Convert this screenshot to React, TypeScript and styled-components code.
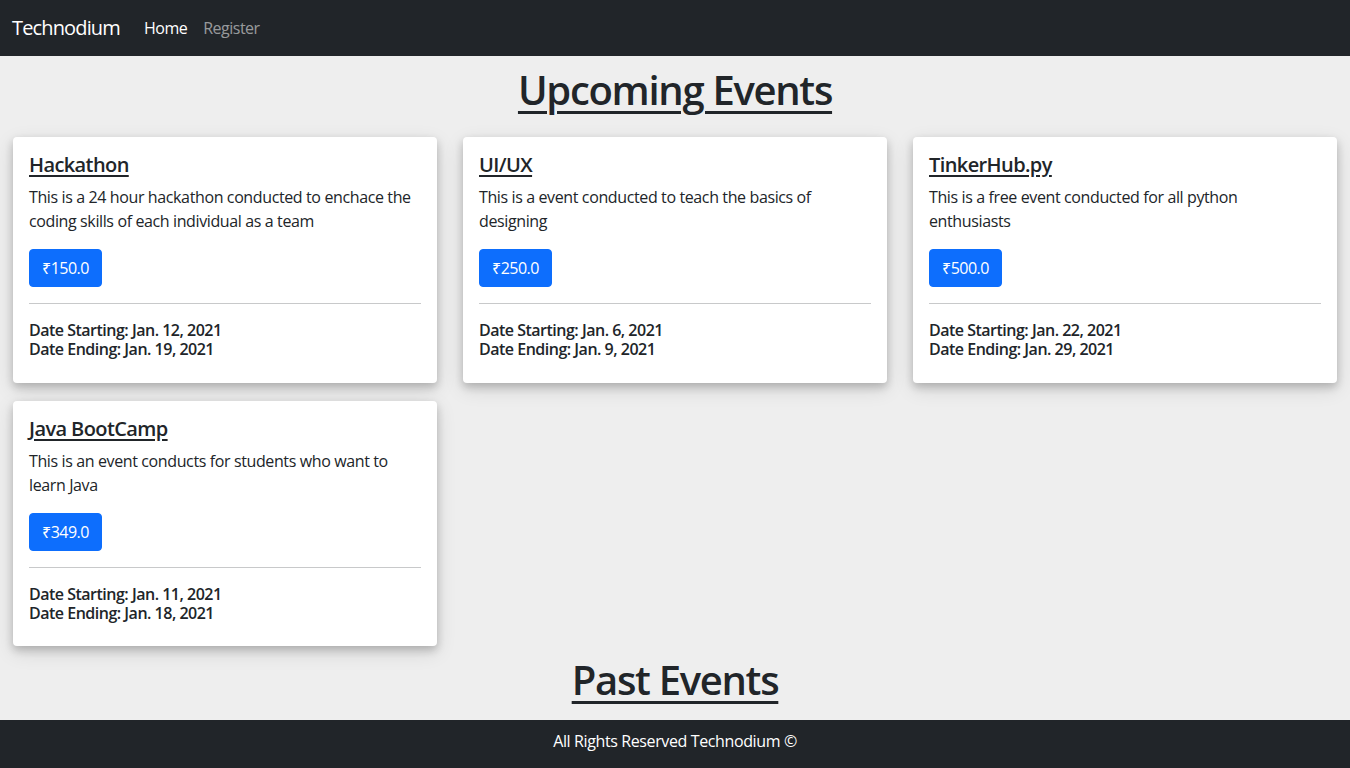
import React from "react";
import styled, { createGlobalStyle } from "styled-components";

const GlobalStyle = createGlobalStyle`
    * {
        box-sizing: border-box;
    }
    body {
        margin: 0;
        background-color: #eeeeee;
        color: #212529;
        font-family: "Open Sans", "Noto Sans", "Liberation Sans", sans-serif;
        font-size: 16px;
        line-height: 1.5;
        letter-spacing: -0.38px;
    }
`;

interface EventItem {
    title: string;
    description: string;
    price: string;
    start: string;
    end: string;
}

const EVENTS: EventItem[] = [
    {
        title: "Hackathon",
        description:
            "This is a 24 hour hackathon conducted to enchace the coding skills of each individual as a team",
        price: "₹150.0",
        start: "Jan. 12, 2021",
        end: "Jan. 19, 2021",
    },
    {
        title: "UI/UX",
        description: "This is a event conducted to teach the basics of designing",
        price: "₹250.0",
        start: "Jan. 6, 2021",
        end: "Jan. 9, 2021",
    },
    {
        title: "TinkerHub.py",
        description: "This is a free event conducted for all python enthusiasts",
        price: "₹500.0",
        start: "Jan. 22, 2021",
        end: "Jan. 29, 2021",
    },
    {
        title: "Java BootCamp",
        description: "This is an event conducts for students who want to learn Java",
        price: "₹349.0",
        start: "Jan. 11, 2021",
        end: "Jan. 18, 2021",
    },
];

export default function App() {
    return (
        <>
            <GlobalStyle />
            <Navbar>
                <Brand href="#">Technodium</Brand>
                <NavLink href="#" active>
                    Home
                </NavLink>
                <NavLink href="#">Register</NavLink>
            </Navbar>
            <Main>
                <Heading top={10} bottom={23}>
                    Upcoming Events
                </Heading>
                <CardGrid>
                    {EVENTS.map((ev) => (
                        <Card key={ev.title}>
                            <CardTitle href="#">{ev.title}</CardTitle>
                            <CardText>{ev.description}</CardText>
                            <PriceButton type="button">{ev.price}</PriceButton>
                            <Divider />
                            <DateLine>
                                Date Starting: {ev.start}
                                <br />
                                Date Ending: {ev.end}
                            </DateLine>
                        </Card>
                    ))}
                </CardGrid>
                <Heading top={10} bottom={16}>
                    Past Events
                </Heading>
            </Main>
            <Footer>All Rights Reserved Technodium ©</Footer>
        </>
    );
}

const Navbar = styled.nav`
    height: 56px;
    display: flex;
    align-items: center;
    padding: 0 12px;
    background-color: #212529;
`;

const Brand = styled.a`
    font-size: 20px;
    line-height: 30px;
    letter-spacing: -0.85px;
    color: #ffffff;
    text-decoration: none;
    margin-right: 16px;
`;

const NavLink = styled.a<{ active?: boolean }>`
    padding: 8px;
    font-size: 16px;
    letter-spacing: -0.5px;
    color: ${({ active }) => (active ? "#ffffff" : "rgba(255, 255, 255, 0.55)")};
    text-decoration: none;
`;

const Main = styled.main`
    padding: 0 13px;
`;

const Heading = styled.h1<{ top: number; bottom: number }>`
    margin: ${({ top }) => top}px 0 ${({ bottom }) => bottom}px;
    text-align: center;
    font-size: 40px;
    font-weight: 600;
    line-height: 48px;
    letter-spacing: -1.3px;
    text-decoration: underline;
    text-underline-offset: 6px;
    text-decoration-thickness: 3px;
`;

const CardGrid = styled.div`
    display: grid;
    grid-template-columns: repeat(3, 1fr);
    column-gap: 26px;
    row-gap: 18px;
`;

const Card = styled.div`
    display: flex;
    flex-direction: column;
    align-items: flex-start;
    padding: 16px;
    background-color: #ffffff;
    border-radius: 4px;
    box-shadow: 0 4px 8px 0 rgba(0, 0, 0, 0.2), 0 6px 20px 0 rgba(0, 0, 0, 0.12);
`;

const CardTitle = styled.a`
    margin-bottom: 8px;
    font-size: 20px;
    font-weight: 600;
    line-height: 24px;
    letter-spacing: -0.6px;
    color: #212529;
    text-decoration: underline;
    text-underline-offset: 3px;
`;

const CardText = styled.p`
    margin: 0 0 16px;
`;

const PriceButton = styled.button`
    padding: 6px 12px;
    border: 1px solid #0d6efd;
    border-radius: 4px;
    background-color: #0d6efd;
    color: #ffffff;
    font-family: inherit;
    font-size: 16px;
    line-height: 24px;
    letter-spacing: -0.5px;
    cursor: pointer;
`;

const Divider = styled.hr`
    align-self: stretch;
    margin: 16px 0;
    border: 0;
    border-top: 1px solid #c8c9ca;
`;

const DateLine = styled.h6`
    margin: 0 0 7.5px;
    padding-top: 1px;
    font-size: 16px;
    font-weight: 600;
    line-height: 19px;
    letter-spacing: -0.5px;
`;

const Footer = styled.footer`
    height: 48px;
    padding-top: 9px;
    text-align: center;
    background-color: #212529;
    color: #ffffff;
`;
